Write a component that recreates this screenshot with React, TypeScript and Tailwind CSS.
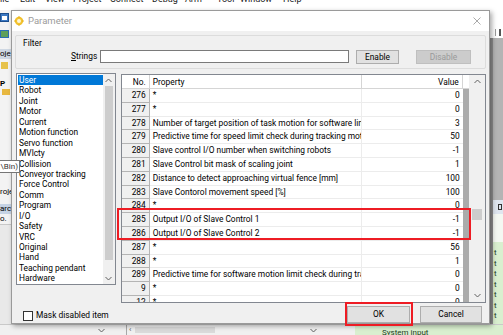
import React from "react";

const FONT = { fontFamily: 'Roboto, "Noto Sans", Arial, sans-serif' };

const menuItems: [string, string][] = [
  ["ile", "w-[20px]"],
  ["Edit", "w-[25px]"],
  ["View", "w-[28px]"],
  ["Project", "w-[37px]"],
  ["Connect", "w-[42px]"],
  ["Debug", "w-[33px]"],
  ["Arm", "w-[32px]"],
  ["Tool", "w-[23px]"],
  ["Window", "w-[43px]"],
  ["Help", "w-[30px]"],
];

const categories = [
  "User",
  "Robot",
  "Joint",
  "Motor",
  "Current",
  "Motion function",
  "Servo function",
  "MVlcty",
  "Collision",
  "Conveyor tracking",
  "Force Control",
  "Comm",
  "Program",
  "I/O",
  "Safety",
  "VRC",
  "Original",
  "Hand",
  "Teaching pendant",
  "Hardware",
];

const rows: [string, string, string][] = [
  ["276", "*", "0"],
  ["277", "*", "0"],
  ["278", "Number of target position of task motion for software limit check", "3"],
  ["279", "Predictive time for speed limit check during tracking motion", "50"],
  ["280", "Slave control I/O number when switching robots", "-1"],
  ["281", "Slave Control bit mask of scaling joint", "1"],
  ["282", "Distance to detect approaching virtual fence [mm]", "100"],
  ["283", "Slave Contorol movement speed [%]", "100"],
  ["284", "*", "0"],
  ["285", "Output I/O of Slave Control 1", "-1"],
  ["286", "Output I/O of Slave Control 2", "-1"],
  ["287", "*", "56"],
  ["288", "*", "1"],
  ["289", "Predictive time for software motion limit check during tracking", "0"],
  ["9", "*", "0"],
  ["12", "*", "0"],
];

function Chevron({ up }: { up?: boolean }) {
  return (
    <svg width="7" height="5" viewBox="0 0 7 5" className="block">
      <path
        d={up ? "M0.5 4 L3.5 1 L6.5 4" : "M0.5 1 L3.5 4 L6.5 1"}
        fill="none"
        stroke="#606060"
        strokeWidth="1"
      />
    </svg>
  );
}

function TitleIcon() {
  return (
    <svg width="10" height="10" viewBox="0 0 10 10" className="block">
      <circle cx="5" cy="5" r="4.2" fill="#f2c230" />
      <circle cx="5" cy="5" r="2" fill="#fff7d6" />
      <path d="M5 0.2 V1.6 M5 8.4 V9.8 M0.2 5 H1.6 M8.4 5 H9.8" stroke="#e0a800" strokeWidth="1" />
    </svg>
  );
}

function Backdrop() {
  return (
    <div className="flex flex-col w-[503px] h-[335px]">
      {/* menu bar, mostly scrolled off */}
      <div className="h-[10px] bg-white overflow-hidden">
        <div className="flex -mt-[7px] text-[9px] leading-[12px] text-[#222]">
          {menuItems.map(([t, w]) => (
            <span key={t} className={`${w} shrink-0`}>
              {t}
            </span>
          ))}
        </div>
      </div>

      <div className="flex flex-1 min-h-0">
        {/* left docked explorer */}
        <div className="w-[11px] bg-[#f3f3f3] flex flex-col text-[8px] leading-[10px] text-black overflow-hidden">
          <div className="h-[3px]" />
          <div className="w-[9px] h-[9px] bg-[#3b78c2] border border-[#1d4f8e] flex items-center justify-center">
            <div className="w-[5px] h-[4px] bg-white" />
          </div>
          <div className="h-[8px]" />
          <div className="w-[9px] h-[8px] bg-[#5fa05a] border border-[#2d6fb3]" />
          <div className="h-[11px]" />
          <div className="h-[10px] bg-[#cfd8e3] -mr-[2px] whitespace-nowrap">oje</div>
          <div className="h-[3px]" />
          <div className="w-[7px] h-[7px] bg-[#e7c24a] ml-[1px]" />
          <div className="h-[10px]" />
          <div className="h-[10px] whitespace-nowrap font-bold">P</div>
          <div className="w-[8px] h-[6px] bg-[#e8b840] ml-[2px]" />
          <div className="h-[92px]" />
          <div className="h-[10px] whitespace-nowrap">roje</div>
          <div className="h-[7px]" />
          <div className="h-[10px] bg-[#c6d3e4] whitespace-nowrap">arc</div>
          <div className="h-[10px] whitespace-nowrap">o.</div>
          <div className="flex-1 bg-[#e9e9e9] border-t border-[#c8c8c8]" />
        </div>

        <div className="flex-1 bg-[#f0f0f0]" />

        {/* right docked panels */}
        <div className="w-[13px] flex flex-col">
          <div className="h-[28px] bg-white flex items-end pb-[2px] gap-[3px] pl-[5px]">
            <div className="w-[1px] h-[7px] bg-[#9a9a9a]" />
            <div className="w-[2px] h-[7px] bg-[#555]" />
          </div>
          <div className="h-[162px] bg-[#b4b4b4] border-l-[3px] border-[#8e8e8e]" />
          <div className="h-[14px] bg-[#dfe6ef] flex items-center pl-[5px] border-l-[3px] border-[#8e8e8e]">
            <div className="w-[4px] h-[6px] border border-[#333]" />
          </div>
          <div className="h-[28px] bg-[#f4f8f2] border-l-[3px] border-[#8e8e8e]" />
          <div className="flex-1 bg-[#d9efcf] border-l-[3px] border-[#8e8e8e] flex flex-col pl-[1px] pt-[6px] text-[8px] leading-[10.5px] text-[#1c3d1c]">
            {Array.from({ length: 7 }).map((_, i) => (
              <span key={i}>t</span>
            ))}
          </div>
        </div>
      </div>

      {/* bottom strip below the dialog */}
      <div className="h-[11px] flex bg-[#f0f0f0] border-t border-[#c9c9c9]">
        <div className="w-[95px]" />
        <div className="w-[12px] flex items-center justify-center">
          <Chevron />
        </div>
        <div className="w-[20px] border-r border-[#a8a8a8]" />
        <div className="w-[8px] text-[8px] leading-[10px] text-[#555] pl-[2px]">‹</div>
        <div className="w-[80px] bg-[#dadada] my-[2px]" />
        <div className="w-[140px] flex items-center pl-[95px]">
          <Chevron />
        </div>
        <div className="flex-1 bg-[#d9efcf] text-[8px] leading-[11px] text-[#1c3d1c] pl-[27px] pt-[2px] overflow-hidden whitespace-nowrap">
          System input
        </div>
      </div>
    </div>
  );
}

function Dialog() {
  return (
    <div className="absolute left-[11px] top-[10px] w-[479px] h-[314px] flex flex-col bg-[#f0f0f0] border border-[#9a9a9a] shadow-[2px_2px_5px_rgba(0,0,0,0.35)]">
      {/* title bar */}
      <div className="h-[20px] bg-white flex items-center shrink-0">
        <div className="ml-[2px]">
          <TitleIcon />
        </div>
        <span className="ml-[4px] text-[9.5px] text-[#9b9b9b]">Parameter</span>
        <svg width="8" height="8" viewBox="0 0 8 8" className="ml-auto mr-[8px]">
          <path d="M0.5 0.5 L7.5 7.5 M7.5 0.5 L0.5 7.5" stroke="#a0a0a0" strokeWidth="0.9" />
        </svg>
      </div>

      {/* body */}
      <div className="flex-1 flex flex-col px-[3px] pt-[4px] text-[8.4px] text-black">
        {/* filter group */}
        <div className="h-[34px] border border-[#dcdcdc] rounded-[2px] flex flex-col pl-[7px] pt-[2px] shrink-0">
          <span className="leading-[10px] h-[10px]">Filter</span>
          <div className="flex items-center h-[15px] mt-[1px]">
            <span className="ml-[48px] w-[29px]">
              <span className="underline">S</span>trings
            </span>
            <div className="w-[249px] h-[13px] bg-white border border-[#7a7a7a]" />
            <button className="ml-[7px] w-[43px] h-[14px] bg-[#e1e1e1] border border-[#adadad] text-[8.4px] leading-[12px] text-black">
              Enable
            </button>
            <button className="ml-[17px] w-[55px] h-[14px] bg-[#cccccc] border border-[#bfbfbf] text-[8.4px] leading-[12px] text-[#9a9a9a]">
              Disable
            </button>
          </div>
        </div>

        <div className="flex mt-[4px]">
          {/* category list */}
          <div className="ml-[1px] w-[100px] h-[212px] bg-white border border-[#828790] flex">
            <div className="flex-1 flex flex-col pt-[1px] pl-[1px]">
              {categories.map((c, i) => (
                <div
                  key={c}
                  className={`h-[10.45px] leading-[10.45px] pl-[1px] whitespace-nowrap ${
                    i === 0 ? "bg-[#0078d7] text-white" : ""
                  }`}
                >
                  {c}
                </div>
              ))}
            </div>
            <div className="w-[12px] bg-[#f0f0f0] flex flex-col items-center">
              <div className="h-[12px] flex items-center">
                <Chevron up />
              </div>
              <div className="w-[8px] h-[174px] bg-[#cdcdcd]" />
              <div className="flex-1" />
              <div className="h-[12px] flex items-center">
                <Chevron />
              </div>
            </div>
          </div>

          {/* parameter grid */}
          <div className="relative ml-[5px] mt-[1px] w-[366px] h-[229px] border border-[#828790] flex">
            <div className="flex-1 bg-[#ababab] overflow-hidden">
              <div className="flex h-[14px] bg-white border-b border-[#d5d5d5]">
                <div className="w-[28px] text-right pr-[3px] leading-[14px] border-r border-[#d5d5d5]">No.</div>
                <div className="w-[212px] pl-[3px] leading-[14px] border-r border-[#d5d5d5]">Property</div>
                <div className="w-[101px] text-right pr-[3px] leading-[14px] border-r border-[#d5d5d5]">Value</div>
              </div>
              {rows.map(([no, prop, val]) => (
                <div key={no} className="flex h-[13.8px]">
                  <div className="w-[28px] bg-[#f0f0f0] text-right pr-[3px] leading-[13px] border-r border-b border-[#b4b4b4]">
                    {no}
                  </div>
                  <div className="w-[212px] bg-white pl-[3px] leading-[13px] border-r border-b border-[#ececec] whitespace-nowrap overflow-hidden">
                    {prop}
                  </div>
                  <div className="w-[101px] bg-white text-right pr-[3px] leading-[13px] border-b border-[#ececec]">
                    {val}
                  </div>
                </div>
              ))}
            </div>
            <div className="w-[16px] bg-[#f0f0f0] flex flex-col items-center">
              <div className="h-[12px] flex items-center">
                <Chevron up />
              </div>
              <div className="h-[122px]" />
              <div className="w-[10px] h-[11px] bg-[#cdcdcd]" />
              <div className="flex-1" />
              <div className="h-[14px] flex items-center">
                <Chevron />
              </div>
            </div>
            {/* highlight around slave control outputs */}
            <div className="absolute left-[-5px] top-[133px] w-[354px] h-[32px] border-2 border-[#ee1c24]" />
          </div>
        </div>

        {/* footer */}
        <div className="relative flex items-center h-[17px] mt-[3px]">
          <div className="ml-[8px] w-[10px] h-[10px] bg-white border border-[#333] mt-[2px]" />
          <span className="ml-[3px] mt-[2px]">Mask disabled item</span>
          <button className="ml-auto w-[63px] h-[17px] bg-[#e1e1e1] border border-[#adadad] text-[8.4px] text-black">
            OK
          </button>
          <button className="ml-[10px] mr-[4px] w-[62px] h-[17px] bg-[#e1e1e1] border border-[#adadad] text-[8.4px] text-black">
            Cancel
          </button>
          <div className="absolute left-[330px] top-[-4px] w-[68px] h-[24px] border-2 border-[#ee1c24]" />
        </div>
      </div>
    </div>
  );
}

export default function App() {
  return (
    <div className="relative w-[503px] h-[335px] overflow-hidden bg-[#f0f0f0]" style={FONT}>
      <Backdrop />
      <Dialog />
      {/* path tooltip from the explorer */}
      <div className="absolute left-0 top-[160px] w-[20px] h-[13px] bg-white border border-[#767676] border-l-0 overflow-hidden flex justify-end items-center pr-[1px] text-[8px] text-[#333] whitespace-nowrap">
        \Bin)
      </div>
    </div>
  );
}
